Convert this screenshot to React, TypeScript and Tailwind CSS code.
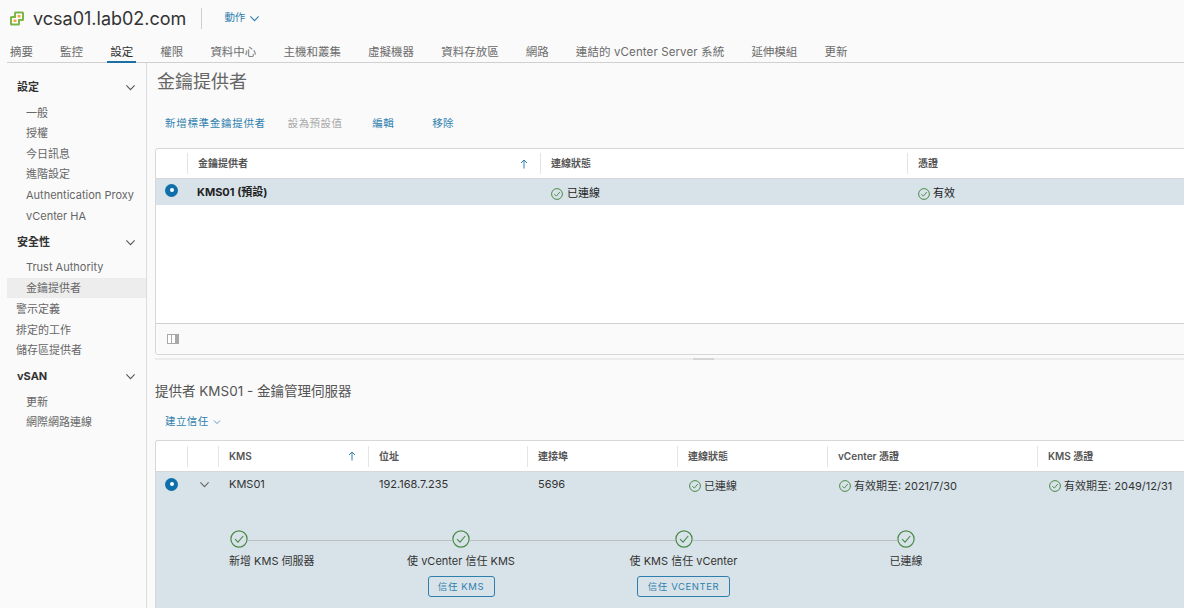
const FONT = "font-['Inter','Noto_Sans_CJK_TC',sans-serif]";

const tabs = ['摘要', '監控', '設定', '權限', '資料中心', '主機和叢集', '虛擬機器', '資料存放區', '網路', '連結的 vCenter Server 系統', '延伸模組', '更新'];

const Logo = () => (
  <svg width="16" height="17" viewBox="0 0 16 17" aria-hidden="true">
    <path d="M1 7.5 Q1 6 2.5 6 H5 V3 Q5 1.5 6.5 1.5 H13.5 Q15 1.5 15 3 V9.5 Q15 11 13.5 11 H11 V14 Q11 15.5 9.5 15.5 H2.5 Q1 15.5 1 14 Z" fill="#7ab648" />
    <rect x="3" y="8" width="6" height="5.5" fill="#fff" />
    <rect x="7" y="3.5" width="6" height="5.5" fill="#fff" />
    <rect x="4.5" y="9.5" width="3" height="2.5" fill="#f2a93b" />
    <rect x="8.5" y="5" width="3" height="2.5" fill="#f2a93b" />
  </svg>
);

const Chevron = ({ size = 11, color = '#565656' }: { size?: number; color?: string }) => (
  <svg width={size} height={size} viewBox="0 0 12 12" fill="none" stroke={color} strokeWidth="1.2" aria-hidden="true">
    <path d="M1.5 3.8 6 8.3l4.5-4.5" />
  </svg>
);

const Check = ({ size = 12 }: { size?: number }) => (
  <svg width={size} height={size} viewBox="0 0 18 18" fill="none" stroke="#4a8a46" aria-hidden="true" className="shrink-0">
    <circle cx="9" cy="9" r="8.1" strokeWidth={size > 14 ? 1.2 : 1.5} />
    <path d="M5 9.2 8 12.2 13.2 6" strokeWidth={size > 14 ? 1.1 : 1.4} />
  </svg>
);

const Radio = () => (
  <span className="flex h-[13px] w-[13px] items-center justify-center rounded-full bg-[#0f6fa8]">
    <span className="h-[4px] w-[4px] rounded-full bg-white" />
  </span>
);

const SortArrow = () => (
  <svg width="8" height="10" viewBox="0 0 8 10" fill="none" stroke="#2f7fae" strokeWidth="1" aria-hidden="true">
    <path d="M4 9.5V1M1 4l3-3 3 3" />
  </svg>
);

const SideGroup = ({ label }: { label: string }) => (
  <div className="flex h-[21px] items-center justify-between pl-[17px] pr-[10px] text-[11px] font-bold text-[#333]">
    {label}
    <Chevron />
  </div>
);

const SideItem = ({ label, active = false }: { label: string; active?: boolean }) => (
  <div className={`ml-[7px] flex h-[20.6px] items-center pl-[19px] text-[11px] text-[#666] ${active ? 'bg-[#ededed]' : ''}`}>{label}</div>
);

const SideLink = ({ label }: { label: string }) => (
  <div className="flex h-[20.6px] items-center pl-[16px] text-[11px] text-[#666]">{label}</div>
);

const Sidebar = () => (
  <aside className="w-[147px] shrink-0 border-r border-[#dcdcdc] pt-[14px]">
    <SideGroup label="設定" />
    <div className="mt-[4.5px]">
      {['一般', '授權', '今日訊息', '進階設定', 'Authentication Proxy', 'vCenter HA'].map((t) => (
        <SideItem key={t} label={t} />
      ))}
    </div>
    <div className="mt-[5.5px]">
      <SideGroup label="安全性" />
    </div>
    <div className="mt-[4.5px]">
      <SideItem label="Trust Authority" />
      <SideItem label="金鑰提供者" active />
    </div>
    <div className="mt-[1px]">
      <SideLink label="警示定義" />
      <SideLink label="排定的工作" />
      <SideLink label="儲存區提供者" />
    </div>
    <div className="mt-[4.5px]">
      <SideGroup label="vSAN" />
    </div>
    <div className="mt-[5px]">
      <SideItem label="更新" />
      <SideItem label="網際網路連線" />
    </div>
  </aside>
);

const HeadCell = ({ children }: { children?: React.ReactNode }) => (
  <div className="flex h-[21px] items-center justify-between border-l border-[#e4e4e4] pl-[10px] pr-[12px] text-[10px] font-semibold text-[#565656]">
    {children}
  </div>
);

const providerCols = 'grid-cols-[31px_353px_367px_1fr]';

const ProviderTable = () => (
  <div className="mt-[15px] w-[1040px] overflow-hidden rounded-[3px] border border-[#d7d7d7] bg-white">
    <div className={`grid h-[30px] items-center border-b border-[#d7d7d7] ${providerCols}`}>
      <div />
      <HeadCell>
        金鑰提供者
        <SortArrow />
      </HeadCell>
      <HeadCell>連線狀態</HeadCell>
      <HeadCell>憑證</HeadCell>
    </div>
    <div className={`grid h-[26px] items-center bg-[#d8e3e9] text-[11px] text-[#222] ${providerCols}`}>
      <div className="-mt-[4px] flex justify-center">
        <Radio />
      </div>
      <div className="pl-[10px] font-bold">KMS01 (預設)</div>
      <div className="flex items-center gap-[4px] pl-[11px] pt-[3px]">
        <Check />
        已連線
      </div>
      <div className="flex items-center gap-[3px] pl-[11px] pt-[3px]">
        <Check />
        有效
      </div>
    </div>
    <div className="h-[119px] border-b border-[#cfcfcf]" />
    <div className="flex h-[30px] items-center bg-[#fafafa] pl-[11px]">
      <svg width="12" height="10" viewBox="0 0 12 10" aria-hidden="true">
        <rect x="0.5" y="0.5" width="11" height="9" fill="#fff" stroke="#a8a8a8" />
        <rect x="4" y="0.5" width="1" height="9" fill="#a8a8a8" />
        <rect x="8" y="0.5" width="3.5" height="9" fill="#a8a8a8" />
      </svg>
    </div>
  </div>
);

const kmsCols = 'grid-cols-[31px_31px_150px_159px_150px_150px_210px_1fr]';

const KmsTable = () => (
  <div className="mt-[8px] w-[1040px] flex-1 overflow-hidden rounded-t-[3px] border border-b-0 border-[#d7d7d7] bg-[#d8e3e9]">
    <div className={`grid h-[31px] items-center border-b border-[#d7d7d7] bg-white ${kmsCols}`}>
      <div />
      <HeadCell />
      <HeadCell>
        KMS
        <SortArrow />
      </HeadCell>
      <HeadCell>位址</HeadCell>
      <HeadCell>連接埠</HeadCell>
      <HeadCell>連線狀態</HeadCell>
      <HeadCell>vCenter 憑證</HeadCell>
      <HeadCell>KMS 憑證</HeadCell>
    </div>
    <div className={`grid h-[24px] items-center text-[11px] text-[#333] ${kmsCols}`}>
      <div className="flex justify-center">
        <Radio />
      </div>
      <div className="flex justify-center pl-[3px]">
        <Chevron color="#666" />
      </div>
      <div className="pl-[11px]">KMS01</div>
      <div className="pl-[11px]">192.168.7.235</div>
      <div className="pl-[11px]">5696</div>
      <div className="flex items-center gap-[3px] pl-[12px] pt-[4px]">
        <Check />
        已連線
      </div>
      <div className="flex items-center gap-[3px] pl-[12px] pt-[4px]">
        <Check />
        有效期至: 2021/7/30
      </div>
      <div className="flex items-center gap-[3px] pl-[12px] pt-[4px]">
        <Check />
        有效期至: 2049/12/31
      </div>
    </div>
    <div className="ml-[74px] mt-[34px] flex w-[685px] items-center">
      <Check size={18} />
      <div className="mt-[3px] h-px flex-1 bg-[#b9bfc3]" />
      <Check size={18} />
      <div className="mt-[3px] h-px flex-1 bg-[#b9bfc3]" />
      <Check size={18} />
      <div className="mt-[3px] h-px flex-1 bg-[#b9bfc3]" />
      <Check size={18} />
    </div>
    <div className="ml-[73px] mt-[5px] grid grid-cols-[121px_222px_223px_222px] text-[11px] text-[#333]">
      <div className="whitespace-nowrap leading-[16px]">新增 KMS 伺服器</div>
      <div className="flex flex-col items-center leading-[16px]">
        使 vCenter 信任 KMS
        <button className="mt-[7px] h-[21px] w-[67px] rounded-[3px] border border-[#2f7fae] text-[9.5px] tracking-[0.6px] text-[#2f7fae]">信任 KMS</button>
      </div>
      <div className="flex flex-col items-center leading-[16px]">
        使 KMS 信任 vCenter
        <button className="mt-[7px] h-[21px] w-[93px] rounded-[3px] border border-[#2f7fae] text-[9.5px] tracking-[0.6px] text-[#2f7fae]">信任 VCENTER</button>
      </div>
      <div className="text-center leading-[16px]">已連線</div>
    </div>
  </div>
);

export default function App() {
  return (
    <div className={`flex h-[608px] w-[1184px] flex-col overflow-hidden bg-[#fafafa] ${FONT}`}>
      <header className="flex h-[36px] shrink-0 items-center pl-[9px]">
        <Logo />
        <h1 className="ml-[8px] text-[18px] text-[#333]">vcsa01.lab02.com</h1>
        <div className="ml-[15px] h-[21px] w-px bg-[#cfcfcf]" />
        <button className="ml-[22px] flex items-center gap-[4px] text-[10.5px] text-[#2f7fae]">
          動作
          <Chevron color="#2f7fae" />
        </button>
      </header>
      <nav className="ml-[7px] flex h-[27px] shrink-0 items-stretch gap-[21.1px] border-b border-[#d0d0d0] text-[11.5px] text-[#6b6b6b]">
        {tabs.map((t) => (
          <div
            key={t}
            className={`-mb-px flex items-center whitespace-nowrap border-b-2 px-[3px] pt-[8px] ${t === '設定' ? 'border-[#1a6fa3] text-[#333]' : 'border-transparent'} ${t.includes('vCenter') ? 'tracking-[0.11px]' : ''}`}
          >
            {t}
          </div>
        ))}
      </nav>
      <div className="flex min-h-0 flex-1">
        <Sidebar />
        <main className="flex min-w-0 flex-1 flex-col pl-[8px]">
          <h2 className="ml-[2px] mt-[8px] text-[18px] leading-[22px] text-[#666]">金鑰提供者</h2>
          <div className="ml-[10px] mt-[22px] flex h-[18px] items-center text-[10.5px] tracking-[0.4px] text-[#2f7fae]">
            <span className="tracking-[0.7px]">新增標準金鑰提供者</span>
            <span className="ml-[22px] text-[#a9a9a9]">設為預設值</span>
            <span className="ml-[30px]">編輯</span>
            <span className="ml-[38px]">移除</span>
          </div>
          <ProviderTable />
          <div className="mt-[3px] flex h-[2px] w-[1037px] shrink-0 bg-[#ececec] pl-[538px]">
            <div className="h-[2px] w-[21px] bg-[#d6d6d6]" />
          </div>
          <h3 className="mt-[21px] text-[13.5px] leading-[20px] text-[#555]">提供者 KMS01 - 金鑰管理伺服器</h3>
          <div className="ml-[10px] mt-[11px] flex h-[20px] items-center gap-[4px] text-[10.5px] tracking-[0.4px] text-[#2f7fae]">
            建立信任
            <Chevron size={8} color="#2f7fae" />
          </div>
          <KmsTable />
        </main>
      </div>
    </div>
  );
}
